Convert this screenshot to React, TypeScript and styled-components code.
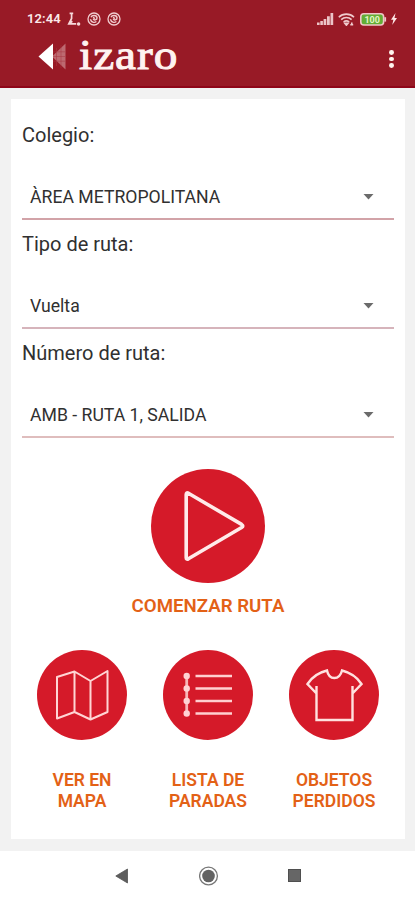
import React from "react";
import styled, { createGlobalStyle } from "styled-components";

const Global = createGlobalStyle`
  * { box-sizing: border-box; }
  body { margin: 0; background: #f2f2f2; font-family: Roboto, "Liberation Sans", sans-serif; }
  svg { display: block; flex: none; }
`;

const Screen = styled.div`
  display: flex;
  flex-direction: column;
  width: 415px;
  height: 900px;
  overflow: hidden;
  background: #f2f2f2;
`;

const Header = styled.header`
  height: 88px;
  flex: none;
  background: #981a26;
  border-bottom: 2px solid #8f0619;
  color: #fff;
`;

const StatusBar = styled.div`
  display: flex;
  align-items: center;
  justify-content: space-between;
  height: 38px;
  padding: 0 18px 0 27px;
`;

const StatusGroup = styled.div<{ $gap: number }>`
  display: flex;
  align-items: center;
  gap: ${(p) => p.$gap}px;
`;

const Clock = styled.span`
  width: 34px;
  font-size: 13px;
  font-weight: 600;
  letter-spacing: 0.1px;
  line-height: 38px;
  white-space: nowrap;
  color: #fbe9e9;
`;

const AppBar = styled.div`
  display: flex;
  align-items: center;
  justify-content: space-between;
  height: 42px;
  padding: 0 21px 0 38px;
`;

const Brand = styled.div`
  display: flex;
  align-items: center;
  gap: 13px;
  margin-top: -6px;
`;

const Wordmark = styled.span`
  font-family: "Liberation Serif", serif;
  font-size: 43px;
  font-weight: 400;
  line-height: 38px;
  letter-spacing: 0.9px;
  margin-top: -2px;
  transform: scaleX(1.1);
  transform-origin: left center;
  -webkit-text-stroke: 1px #fff3f0;
  color: #fff3f0;
`;

const MenuButton = styled.button`
  display: flex;
  flex-direction: column;
  align-items: center;
  gap: 1.8px;
  padding: 0;
  border: 0;
  background: none;
`;

const Dot = styled.span`
  width: 4.8px;
  height: 4.8px;
  border-radius: 50%;
  background: #fff4ee;
`;

const Card = styled.main`
  display: flex;
  flex-direction: column;
  flex: none;
  width: 394px;
  height: 740px;
  margin: 11px 0 12px 11px;
  padding: 12px 11px 0;
  background: #fff;
`;

const Field = styled.div`
  height: 109px;
`;

const Label = styled.label`
  display: block;
  height: 65px;
  line-height: 48px;
  font-size: 20px;
  color: #303030;
`;

const Select = styled.div<{ $line: string }>`
  display: flex;
  align-items: center;
  justify-content: space-between;
  height: 44px;
  padding: 0 20px 0 8px;
  border-bottom: 2.4px solid ${(p) => p.$line};
  font-size: 17.65px;
  color: #303030;
`;

const Primary = styled.div`
  display: flex;
  flex-direction: column;
  align-items: center;
  margin-top: 31px;
`;

const Actions = styled.div`
  display: grid;
  grid-template-columns: repeat(3, 126px);
  justify-content: center;
  margin-top: 33.4px;
`;

const Action = styled.div`
  display: flex;
  flex-direction: column;
  align-items: center;
`;

const RoundButton = styled.button<{ $size: number }>`
  display: flex;
  align-items: center;
  justify-content: center;
  width: ${(p) => p.$size}px;
  height: ${(p) => p.$size}px;
  padding: 0;
  border: 0;
  border-radius: 50%;
  background: #d51a29;
`;

const Caption = styled.span<{ $top: number; $size: number }>`
  margin-top: ${(p) => p.$top}px;
  font-size: ${(p) => p.$size}px;
  font-weight: 600;
  line-height: 21px;
  text-align: center;
  white-space: pre-line;
  color: #e36116;
`;

const NavBar = styled.nav`
  display: flex;
  align-items: center;
  justify-content: space-between;
  height: 49px;
  padding: 0 114px 0 115px;
  background: #fff;
`;

const Location = () => (
  <svg width="14" height="14" viewBox="0 0 14 14" fill="none" stroke="#f6d8da" strokeWidth="1.7">
    <path d="M2.6 1.3H6.2M4.6 1.5V6.5L1.8 11.8H9.2M1.8 11.8L5.4 9.3" />
    <circle cx="11.6" cy="12" r=".9" />
  </svg>
);

const Swirl = () => (
  <svg width="14" height="14" viewBox="0 0 14 14" fill="none" stroke="#f1cccf">
    <circle cx="7" cy="7" r="6" strokeWidth="1.3" />
    <path d="M4 5.2C5 2.8 9.7 3 10 5.7C10.2 8.2 6.8 8.6 6.2 6.8M3.4 7.2C4.2 10.2 7.2 11.2 9.4 9.5M6 5.3L8 6.5" strokeWidth="1.4" />
  </svg>
);

const Signal = () => (
  <svg width="17" height="12" viewBox="0 0 17 12" fill="#ecc4c7">
    <path d="M0 9.5h2.6V12H0zM3.3 8h2.6v4H3.3zM6.6 6h2.7v6H6.6zM10 3.2h2.8V12H10zM13.5 0h2.7v12h-2.7z" />
  </svg>
);

const Wifi = () => (
  <svg width="17" height="13" viewBox="0 0 17 13" fill="none" stroke="#f0cbcd" strokeWidth="1.6">
    <path d="M.8 4.2C5 .1 11.8 .1 16 4.2M3.2 6.6C6.2 3.8 10.6 3.8 13.6 6.6M5.6 9C7.3 7.5 9.4 7.5 11.2 9" />
    <path d="M6.8 10.2H10L8.4 12.2ZM12.3 11.8h2.9M13.8 9.4v2.4" />
  </svg>
);

const Battery = () => (
  <svg width="27" height="13" viewBox="0 0 27 13">
    <rect x=".8" y=".8" width="22.8" height="11.2" rx="3" fill="#62ad35" stroke="#f1c6c8" strokeWidth="1.6" />
    <path d="M25.2 4.2v4.4" stroke="#f1c6c8" strokeWidth="1.8" />
    <text x="12.2" y="9.7" textAnchor="middle" fontFamily="Roboto, sans-serif" fontWeight="700" fontSize="9" fill="#e4f5c5">100</text>
  </svg>
);

const Bolt = () => (
  <svg width="6" height="12" viewBox="0 0 6 12">
    <path d="M4.5 0L0 6.8H2.4L1.2 12L6 4.9H3.5Z" fill="#ffe8e7" />
  </svg>
);

const Mark = () => (
  <svg width="28" height="27" viewBox="0 0 28 27">
    <path d="M27.5 .5V26.5L14 13.5Z" fill="#bd6970" />
    <path d="M15 8.8H27M15 13.5H27M15 18.2H27M18.5 5V23M23 2V25" stroke="#a73641" strokeWidth=".5" />
    <path d="M15 .5V26.5L.5 13.5Z" fill="#fff" />
  </svg>
);

const Caret = () => (
  <svg width="11" height="6" viewBox="0 0 11 6">
    <path d="M.5 0H10.5L5.5 5.6Z" fill="#6b6b6b" />
  </svg>
);

const PlayIcon = () => (
  <svg width="114" height="114" viewBox="0 0 114 114" fill="none">
    <path d="M35.2 25.5Q35.2 23 37.4 24.2L90.6 55.4Q93 57 90.6 58.5L37.4 89.8Q35.2 91 35.2 88.5Z" stroke="#ffebea" strokeWidth="3.6" strokeLinejoin="round" />
  </svg>
);

const MapIcon = () => (
  <svg width="90" height="90" viewBox="0 0 90 90" fill="none" stroke="#ffd5d4" strokeWidth="2" strokeLinejoin="round">
    <path d="M20 27L37.5 21.5L53.5 31L70.5 21V62L53.5 69.5L37.5 62L20 68.5ZM37.5 21.5V62M53.5 31V69.5" />
  </svg>
);

const stops = [26, 38.5, 51, 63.5];

const StopsIcon = () => (
  <svg width="90" height="90" viewBox="0 0 90 90" fill="none">
    <path d="M23.7 26V63.5" stroke="#f8b6b8" strokeWidth="2.8" />
    {stops.map((y) => (
      <g key={y}>
        <circle cx="23.7" cy={y} r="3.2" fill="#ffd2d3" />
        <path d={`M32.5 ${y}H69`} stroke="#ffd0d0" strokeWidth="2.7" />
      </g>
    ))}
  </svg>
);

const ShirtIcon = () => (
  <svg width="90" height="90" viewBox="0 0 90 90" fill="none" stroke="#ffe1df" strokeWidth="2.4">
    <path d="M27.5 36V70H63.5V36M27.5 43.5L18.5 34C23 27 29.5 22.5 38 20.5C40 30.5 50.5 30.5 53 20.5C61 22.5 68 27 72.5 34L63.5 43.5" />
  </svg>
);

const fields = [
  { label: "Colegio:", value: "ÀREA METROPOLITANA", line: "#d2a3a8" },
  { label: "Tipo de ruta:", value: "Vuelta", line: "#d6b4bb" },
  { label: "Número de ruta:", value: "AMB - RUTA 1, SALIDA", line: "#dfbdbd" },
];

const actions = [
  { text: "VER EN\nMAPA", icon: <MapIcon /> },
  { text: "LISTA DE\nPARADAS", icon: <StopsIcon /> },
  { text: "OBJETOS\nPERDIDOS", icon: <ShirtIcon /> },
];

export default function App() {
  return (
    <Screen>
      <Global />
      <Header>
        <StatusBar>
          <StatusGroup $gap={6}>
            <Clock>12:44</Clock>
            <Location />
            <Swirl />
            <Swirl />
          </StatusGroup>
          <StatusGroup $gap={4.5}>
            <Signal />
            <Wifi />
            <Battery />
            <Bolt />
          </StatusGroup>
        </StatusBar>
        <AppBar>
          <Brand>
            <Mark />
            <Wordmark>izaro</Wordmark>
          </Brand>
          <MenuButton aria-label="Menú">
            <Dot />
            <Dot />
            <Dot />
          </MenuButton>
        </AppBar>
      </Header>
      <Card>
        {fields.map((f) => (
          <Field key={f.label}>
            <Label>{f.label}</Label>
            <Select $line={f.line}>
              {f.value}
              <Caret />
            </Select>
          </Field>
        ))}
        <Primary>
          <RoundButton $size={114} aria-label="Comenzar ruta">
            <PlayIcon />
          </RoundButton>
          <Caption $top={13} $size={18.7}>COMENZAR RUTA</Caption>
        </Primary>
        <Actions>
          {actions.map((a) => (
            <Action key={a.text}>
              <RoundButton $size={90} aria-label={a.text}>
                {a.icon}
              </RoundButton>
              <Caption $top={30} $size={17.5}>{a.text}</Caption>
            </Action>
          ))}
        </Actions>
      </Card>
      <NavBar>
        <svg width="14" height="16" viewBox="0 0 14 16">
          <path d="M12.5 1V15L.8 8Z" fill="#5d5d5d" stroke="#555" strokeWidth=".8" />
        </svg>
        <svg width="20" height="20" viewBox="0 0 20 20">
          <circle cx="9.5" cy="10" r="8.9" fill="none" stroke="#777" strokeWidth="1.3" />
          <circle cx="9.5" cy="10" r="6.3" fill="#636363" />
        </svg>
        <svg width="13" height="13" viewBox="0 0 13 13">
          <rect x=".5" y=".5" width="12" height="12" fill="#666" stroke="#4f4f4f" />
        </svg>
      </NavBar>
    </Screen>
  );
}
